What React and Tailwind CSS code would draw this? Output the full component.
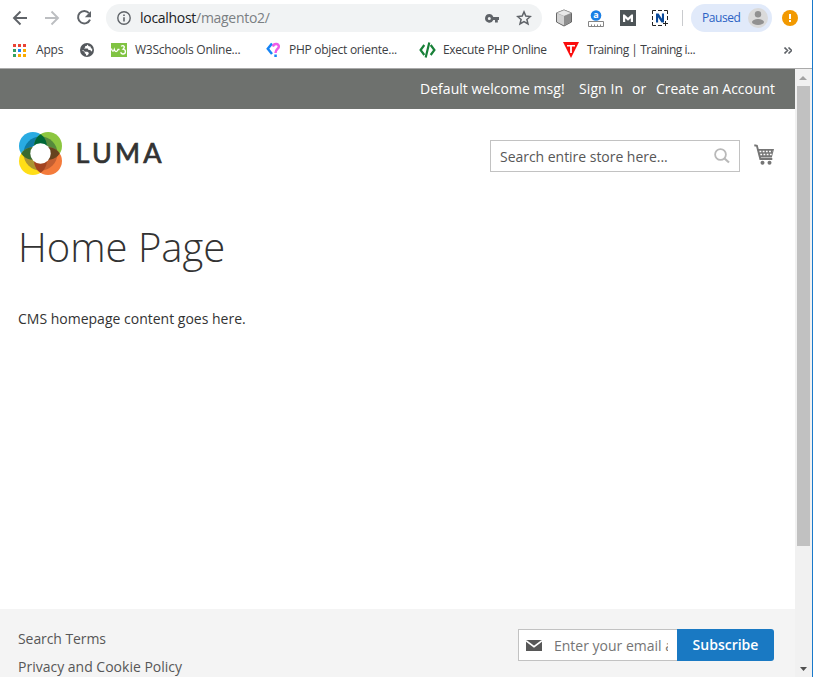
import React from "react";

function BackIcon({ color, flip }) {
  return (
    <svg width="16" height="16" viewBox="0 0 16 16" fill="none" stroke={color} strokeWidth="1.9" className={flip ? "-scale-x-100" : ""}>
      <path d="M15 8H2.5M8.5 1.5L2 8l6.5 6.5" />
    </svg>
  );
}

function ReloadIcon() {
  return (
    <svg width="16" height="16" viewBox="0 0 16 16" fill="none">
      <path d="M13 3.2A6.2 6.2 0 1 0 14 9.6" stroke="#5f6368" strokeWidth="2" />
      <path d="M15 1v6.2H8.8z" fill="#5f6368" />
    </svg>
  );
}

function InfoIcon() {
  return (
    <svg width="14" height="14" viewBox="0 0 14 14" fill="none">
      <circle cx="7" cy="7" r="6.2" stroke="#5f6368" strokeWidth="1.4" />
      <path d="M6.2 6.2h1.6v4.3H6.2zM6.2 3.4h1.6V5H6.2z" fill="#5f6368" />
    </svg>
  );
}

function KeyIcon() {
  return (
    <svg width="14" height="9" viewBox="0 0 14 9">
      <path fillRule="evenodd" fill="#5f6368" d="M4.3 0a4.3 4.3 0 0 1 4 3H14v3h-1.2v2.6H10V6H8.3a4.3 4.3 0 1 1-4-6zm0 2.9a1.5 1.5 0 1 0 0 3 1.5 1.5 0 0 0 0-3z" />
    </svg>
  );
}

function StarIcon() {
  return (
    <svg width="16" height="16" viewBox="0 0 16 16" fill="none" stroke="#5f6368" strokeWidth="1.5">
      <path d="M8 1.9l1.8 4.2 4.6.4-3.5 3 1.1 4.5L8 11.6 4 14l1.1-4.5-3.5-3 4.6-.4z" />
    </svg>
  );
}

function CubeIcon() {
  return (
    <svg width="18" height="18" viewBox="0 0 18 18" stroke="#666" strokeWidth="1" strokeLinejoin="round">
      <path d="M9 1l7.5 3v9L9 17l-7.5-4V4z" fill="#aaa" />
      <path d="M9 1l7.5 3L9 7.3 1.5 4z" fill="#e9e9e9" stroke="#999" strokeWidth=".5" />
      <path d="M9 7.3L16 4.2v8.5l-7 3.8z" fill="#8e8e8e" stroke="none" />
      <path d="M2 4.5l7 2.8v9L2 12.7z" fill="#d2d2d2" stroke="none" />
    </svg>
  );
}

function RulerIcon() {
  return (
    <svg width="16" height="17" viewBox="0 0 16 17">
      <circle cx="8" cy="5.500" r="5.300" fill="#1a80e5" />
      <text x="8" y="8.400" fontSize="9" fontWeight="700" fill="#fff" textAnchor="middle" fontFamily="Open Sans, sans-serif">a</text>
      <path d="M.5 11.500h15v5H.5zM3.500 14.500v2M6.500 14.500v2M9.500 14.500v2M12.500 14.500v2" fill="#fff" stroke="#858585" />
    </svg>
  );
}

function MIcon() {
  return (
    <svg width="16" height="16" viewBox="0 0 16 16">
      <path fill="#4e5558" d="M0 0h16v16H0z" />
      <path d="M3 12V4.500h1.500L8 7.700l3.500-3.200H13V12h-2.200V8.300L8 10.700 5.200 8.300V12z" fill="#fff" />
    </svg>
  );
}

function NIcon() {
  return (
    <svg width="17" height="17" viewBox="0 0 17 17">
      <path d="M.5 4V.5H4M6 .5h4M12 .5h3.500V4M15.500 6v4M.5 6v4M.5 12v3.500H4M6 15.500h4" fill="none" stroke="#222" strokeWidth="1" />
      <path d="M4 12.500v-9h2.600l3.300 5.300V3.500H12v9H9.500L6.100 7.200v5.300z" fill="#0b4a9a" />
      <path d="M13.500 11v5M11 13.500h5" stroke="#222" strokeWidth="1" />
    </svg>
  );
}

function AppsIcon() {
  const rows = [
    ["#ea4335", "#ea4335", "#ea4335"],
    ["#34a162", "#1a83f7", "#f9ab00"],
    ["#34a162", "#f9ab00", "#f9ab00"],
  ];
  return (
    <svg width="13" height="13" viewBox="0 0 13 13" shapeRendering="crispEdges">
      {rows.map((row, y) => row.map((c, x) => <rect key={`${x}-${y}`} x={x * 5} y={y * 5} width="3" height="3" fill={c} />))}
    </svg>
  );
}

function GlobeIcon() {
  return (
    <svg width="14" height="14" viewBox="0 0 14 14">
      <circle cx="7" cy="7" r="7" fill="#54585c" />
      <path d="M7.400 1.600L6.600 3H5.200v1.200L4 5.400h3.700l.9 1.500 1.900.2.400 1.200h1.100a5.600 5.600 0 0 0 .2-2.500L11 5.200l-.5-1.600-1.700-.4zM1.700 7l3 2v1.300l1.300.8v1.300l1.200.2 1.500-1.700V9.800L7.400 8.800H5L3.400 7.200z" fill="#fff" />
    </svg>
  );
}

function W3Icon() {
  return (
    <svg width="16" height="14" viewBox="0 0 16 14">
      <path fill="#80c342" d="M0 0h16v14H0z" />
      <path d="M.5 5.500c.5 3 2 3.600 2.800 1 .8 2.700 2.700 2.700 3.700 0h1.500M10 3.300c3-1.800 4.500.8 2 2.900 3.500.6 3 5-.3 4.800-1.300-.2-1.800-1-1.900-1.900" fill="none" stroke="#fff" strokeWidth="1.300" />
    </svg>
  );
}

function QuestionIcon() {
  return (
    <svg width="15" height="16" viewBox="0 0 15 16" fill="none" strokeWidth="2.500">
      <path d="M6 1.500L1.800 6.800 6 12" stroke="#1684f5" />
      <path d="M6.800 4.500C8 .8 13.200 1.500 12.800 4.800 12.500 7 9.500 7.200 9.500 11" stroke="#ee5ce8" />
      <path d="M8.300 12.500h2.500V15H8.300z" fill="#1684f5" />
    </svg>
  );
}

function CodeIcon() {
  return (
    <svg width="17" height="16" viewBox="0 0 17 16" fill="none" stroke="#188038" strokeWidth="2.200">
      <path d="M5.300 3L1.600 8l3.700 5M11.700 3l3.700 5-3.700 5M10.300.5l-3.600 15" />
    </svg>
  );
}

function TrainingIcon() {
  return (
    <svg width="16" height="16" viewBox="0 0 16 16">
      <path d="M0 0h16L8 16z" fill="#fb0d0d" />
      <path d="M4 3h8v1.600H8.900V11H7.100V4.600H4z" fill="#fff" />
    </svg>
  );
}

function LumaLogo() {
  return (
    <svg width="144" height="44" viewBox="0 0 144 44">
      <defs>
        <clipPath id="ring"><circle cx="21.500" cy="21.500" r="17" /></clipPath>
        <clipPath id="tl"><circle cx="13.900" cy="13.900" r="13.900" /></clipPath>
        <clipPath id="br"><circle cx="29.100" cy="29.100" r="13.900" /></clipPath>
      </defs>
      <circle cx="13.900" cy="13.900" r="13.900" fill="#29abe2" />
      <circle cx="29.100" cy="13.900" r="13.900" fill="#8cc63f" />
      <circle cx="13.900" cy="29.100" r="13.900" fill="#ffde17" />
      <circle cx="29.100" cy="29.100" r="13.900" fill="#f47b3b" />
      <g clipPath="url(#ring)">
        <circle cx="13.900" cy="13.900" r="13.900" fill="#0f7ba3" />
        <circle cx="29.100" cy="13.900" r="13.900" fill="#568a3c" />
        <circle cx="13.900" cy="29.100" r="13.900" fill="#ab9433" />
        <circle cx="29.100" cy="29.100" r="13.900" fill="#c35f31" />
      </g>
      <g clipPath="url(#tl)">
        <circle cx="29.100" cy="13.900" r="13.900" fill="#006837" />
        <circle cx="13.900" cy="29.100" r="13.900" fill="#39692f" />
      </g>
      <g clipPath="url(#br)">
        <circle cx="29.100" cy="13.900" r="13.900" fill="#65431f" />
        <circle cx="13.900" cy="29.100" r="13.900" fill="#a34421" />
      </g>
      <circle cx="21.500" cy="21.500" r="10.200" fill="#fff" />
      <text x="56.500" y="30.600" fontFamily="Lato, sans-serif" fontSize="27" fontWeight="400" fill="#333" stroke="#333" strokeWidth=".7" textLength="86" lengthAdjust="spacing">LUMA</text>
    </svg>
  );
}

function SearchIcon() {
  return (
    <svg width="16" height="16" viewBox="0 0 16 16" fill="none" stroke="#b9b9b9">
      <circle cx="6.500" cy="6.500" r="5.400" strokeWidth="1.800" />
      <path d="M10.500 10.500l4.500 4" strokeWidth="2.200" />
    </svg>
  );
}

function CartIcon() {
  return (
    <svg width="20" height="21" viewBox="0 0 20 21" fill="none" stroke="#757575">
      <path d="M.3 1.300l2.600.5L6.300 15h12" strokeWidth="1.900" />
      <path d="M3.500 5H20l-2.200 8.500H5.800z" fill="#757575" stroke="none" />
      <path d="M5.500 7.500h13M6.300 10.500h11.500" stroke="#fff" strokeWidth="1.300" strokeDasharray="1.800 1.400" />
      <circle cx="8.500" cy="18.700" r="2" fill="#757575" stroke="none" />
      <circle cx="15.500" cy="18.700" r="2" fill="#757575" stroke="none" />
    </svg>
  );
}

function MailIcon() {
  return (
    <svg width="16" height="11" viewBox="0 0 16 11">
      <path fill="#575757" d="M0 0h16v11H0z" />
      <path d="M0 .7l8 6 8-6" fill="none" stroke="#fff" strokeWidth="1.500" />
    </svg>
  );
}

function Toolbar() {
  return (
    <div className="flex h-9 items-center pl-3">
      <BackIcon color="#5f6368" />
      <span className="ml-4"><BackIcon color="#bcbec1" flip /></span>
      <span className="ml-4"><ReloadIcon /></span>
      <div className="ml-[14px] flex h-7 w-[436px] items-center rounded-full bg-[#f1f3f4] pl-[11px]">
        <InfoIcon />
        <div className="ml-[9px] text-[14px] leading-5 tracking-[-0.29px] text-[#7b7f83]">
          <span className="text-[#202124]">localhost</span>/magento2/
        </div>
        <span className="ml-auto"><KeyIcon /></span>
        <span className="ml-[17px] mr-[10px]"><StarIcon /></span>
      </div>
      <span className="ml-[13px]"><CubeIcon /></span>
      <span className="ml-[15px]"><RulerIcon /></span>
      <span className="ml-4"><MIcon /></span>
      <span className="ml-4"><NIcon /></span>
      <div className="ml-[13px] h-4 w-px bg-[#c9cbce]" />
      <div className="ml-2 flex h-7 w-[81px] items-center justify-between rounded-full bg-[#e1eafa] pl-[11px] pr-1">
        <span className="text-[12px] tracking-[-0.45px] text-[#2b62c4]">Paused</span>
        <svg width="20" height="20" viewBox="0 0 20 20">
          <circle cx="10" cy="10" r="10" fill="#dadada" />
          <circle cx="10" cy="6.200" r="3.200" fill="#919191" />
          <ellipse cx="10" cy="14" rx="6" ry="3" fill="#919191" />
        </svg>
      </div>
      <svg className="ml-[10px]" width="16" height="16" viewBox="0 0 16 16">
        <circle cx="8" cy="8" r="8" fill="#f29900" />
        <path d="M7 4h2v5H7zM7 10h2v2H7z" fill="#fff" />
      </svg>
    </div>
  );
}

function Bookmark({ icon, label, width, className }) {
  return (
    <div className={`flex shrink-0 items-center whitespace-nowrap text-[12px] text-[#3c4043] ${width}`}>
      {icon}
      <span className={className}>{label}</span>
    </div>
  );
}

function BookmarkBar() {
  return (
    <div className="flex h-8 items-center pb-1 pl-[13px]">
      <Bookmark width="w-[67px]" icon={<AppsIcon />} label="Apps" className="ml-[10px] tracking-[-0.2px]" />
      <Bookmark width="w-[31px]" icon={<GlobeIcon />} label="" />
      <Bookmark width="w-[155px]" icon={<W3Icon />} label="W3Schools Online..." className="ml-2 tracking-[-0.26px]" />
      <Bookmark width="w-[153px]" icon={<QuestionIcon />} label="PHP object oriente..." className="ml-2 tracking-[-0.27px]" />
      <Bookmark width="w-[144px]" icon={<CodeIcon />} label="Execute PHP Online" className="ml-[7px] tracking-[-0.36px]" />
      <Bookmark width="w-[140px]" icon={<TrainingIcon />} label="Training | Training i..." className="ml-2 tracking-[-0.47px]" />
      <svg className="ml-auto mr-5" width="8" height="7" viewBox="0 0 8 7" fill="none" stroke="#5f6368" strokeWidth="1.600">
        <path d="M.5.500l3 3-3 3M4.500.500l3 3-3 3" />
      </svg>
    </div>
  );
}

export default function App() {
  return (
    <div className="flex h-[677px] w-[813px] overflow-hidden bg-white font-['Open_Sans',sans-serif]">
      <div className="flex w-[812px] flex-col">
        <Toolbar />
        <BookmarkBar />
        <div className="h-px shrink-0 bg-[#aaa]" />
        <div className="flex min-h-0 flex-1">
          <div className="flex w-[795px] flex-col text-[14px] leading-5 text-[#333]">
            <div className="flex h-10 shrink-0 items-center whitespace-nowrap bg-[#6e716e] pl-[420px] font-medium text-white">
              <span className="w-[159px] tracking-[0.03px]">Default welcome msg!</span>
              <span className="w-[53px] tracking-[0.1px]">Sign In</span>
              <span className="w-6">or</span>
              <span className="tracking-[-0.03px]">Create an Account</span>
            </div>
            <header className="flex h-[90px] shrink-0 items-center pl-[19px]">
              <LumaLogo />
              <div className="ml-[327px] mt-1 flex h-8 w-[250px] items-center justify-between border border-[#c2c2c2] pl-[9px] pr-[9px] text-[#575757]">
                <span className="pt-0.5 tracking-[-0.03px]">Search entire store here...</span>
                <SearchIcon />
              </div>
              <span className="ml-[14px] mt-[1px]"><CartIcon /></span>
            </header>
            <main className="min-h-0 flex-1 pl-[18px]">
              <h1 className="mt-[26px] text-[40px] font-light leading-[44px]">Home Page</h1>
              <p className="mt-[40px]">CMS homepage content goes here.</p>
            </main>
            <footer className="flex h-[68px] shrink-0 justify-between bg-[#f4f4f4] pl-[18px] pr-[21px] pt-5 text-[#575757]">
              <div className="flex flex-col gap-2">
                <a className="tracking-[-0.08px]">Search Terms</a>
                <a>Privacy and Cookie Policy</a>
              </div>
              <div className="flex h-8">
                <div className="flex w-[159px] items-center border border-r-0 border-[#c2c2c2] bg-white pl-[7px] pr-[9px]">
                  <span className="shrink-0"><MailIcon /></span>
                  <span className="ml-3 overflow-hidden whitespace-nowrap pt-0.5 text-[#757575]">Enter your email a</span>
                </div>
                <button className="w-[97px] rounded-r-[3px] bg-[#1979c3] font-semibold text-white">Subscribe</button>
              </div>
            </footer>
          </div>
          <div className="flex w-[17px] flex-col items-center bg-[#f1f1f1] pr-px">
            <svg className="mt-[7px] shrink-0" width="8" height="4" viewBox="0 0 8 4"><path d="M4 0l4 4H0z" fill="#a3a3a3" /></svg>
            <div className="mt-[6px] h-[460px] w-[13px] shrink-0 bg-[#c1c1c1]" />
            <svg className="mb-[6px] mt-auto shrink-0" width="7" height="4" viewBox="0 0 7 4"><path d="M0 0h7L3.500 4z" fill="#505050" /></svg>
          </div>
        </div>
      </div>
      <div className="w-px bg-[#1979ca]" />
    </div>
  );
}
